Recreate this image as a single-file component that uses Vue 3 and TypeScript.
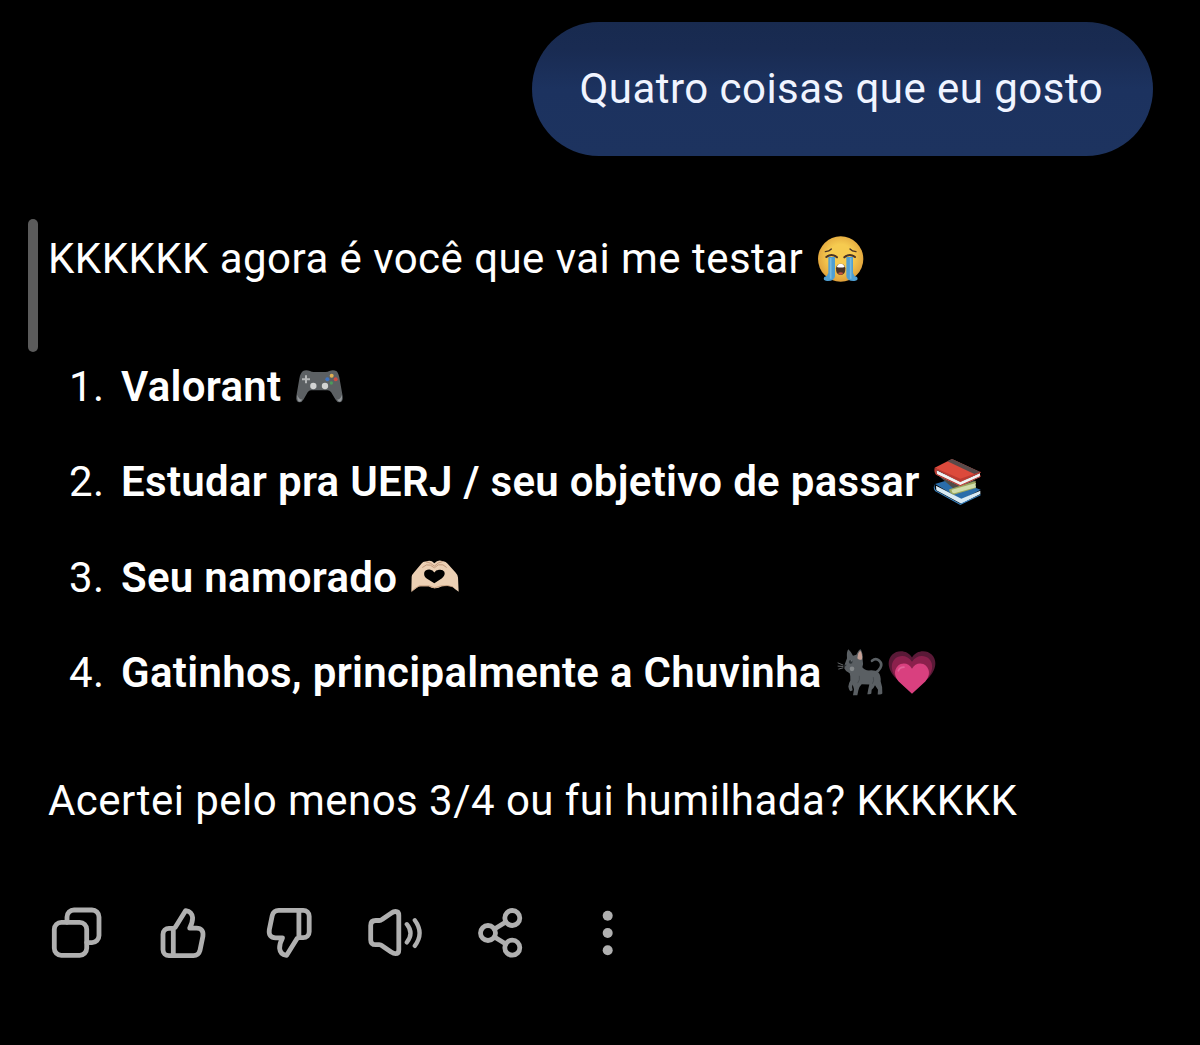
<script setup lang="ts">
type Emoji = 'gamepad' | 'books' | 'hands' | 'cat' | 'heart'

interface Favorite {
  text: string
  cls: string
  emojis: Emoji[]
}

const question = 'Quatro coisas que eu gosto'
const intro = 'KKKKKK agora é você que vai me testar'
const outro = 'Acertei pelo menos 3/4 ou fui humilhada? KKKKKK'

const favorites: Favorite[] = [
  { text: 'Valorant', cls: 'valorant', emojis: ['gamepad'] },
  { text: 'Estudar pra UERJ / seu objetivo de passar', cls: 'uerj', emojis: ['books'] },
  { text: 'Seu namorado', cls: 'namorado', emojis: ['hands'] },
  { text: 'Gatinhos, principalmente a Chuvinha', cls: 'gatinhos', emojis: ['cat', 'heart'] },
]
</script>

<template>
  <main class="chat">
    <div class="bubble">{{ question }}</div>

    <section class="reply">
      <div class="marker"></div>
      <div class="content">
        <p class="line intro">
          <span>{{ intro }}</span>
          <svg class="emoji" viewBox="51 25 150 150" role="img" aria-label="😭">
            <defs>
              <radialGradient id="face" cx=".5" cy=".45" r=".55">
                <stop offset=".5" stop-color="#f6cb50" />
                <stop offset="1" stop-color="#dfa03a" />
              </radialGradient>
            </defs>
            <circle cx="125" cy="100" r="68" fill="url(#face)" />
            <path d="M79 78q12-1 18-8M171 78q-12-1-18-8" fill="none" stroke="#4b3426" stroke-width="4" stroke-linecap="round" />
            <path d="M88 94h20v58q-2 15-24 14-14-1-8-12 10-3 12-12zM162 94h-20v58q2 15 24 14 14-1 8-12-10-3-12-12z" fill="#4f9fd2" />
            <path d="M95 97v62M155 97v62" stroke="#76b9de" stroke-width="5" />
            <path d="M82 94q16-13 32 1M168 94q-16-13-32 1" fill="none" stroke="#4b3426" stroke-width="6" stroke-linecap="round" />
            <path d="M111 128q1-14 14-14t14 14q1 20-14 20t-14-20z" fill="#493326" />
            <path d="M113 124q3-10 12-10t12 10q-12 3-24 0z" fill="#fff" />
            <path d="M117 142q8-5 16 0-3 5-8 5t-8-5z" fill="#c9573f" />
          </svg>
        </p>

        <ol class="list">
          <li v-for="(item, i) in favorites" :key="item.cls" class="line" :class="item.cls">
            <span class="num">{{ i + 1 }}.</span>
            <strong>{{ item.text }}</strong>
            <template v-for="e in item.emojis" :key="e">
              <svg v-if="e === 'gamepad'" class="emoji" viewBox="27 6 150 150" role="img" aria-label="🎮">
                <path d="M51 33q9-5 21 0 5 3 11 3h36q6 0 11-3 12-5 22 1 6 6 9 24l9 51q2 18-10 18-7 0-12-9l-13-22q-4-5-10-5H75q-6 0-10 6l-12 21q-5 9-12 9-12 0-10-18l9-53q3-17 11-23z" fill="#5c6063" />
                <path d="M34 104q-1 21 7 21 5 0 8-7-10 2-15-14zM168 104q1 21-7 21-5 0-8-7 10 2 15-14z" fill="#94989b" />
                <path d="M60 46v24M48 58h24" stroke="#b4b6b7" stroke-width="6" />
                <circle cx="82" cy="78" r="9.500" fill="#d2d3d3" /><circle cx="117" cy="78" r="9.500" fill="#d2d3d3" />
                <circle cx="137" cy="47" r="6" fill="#e0b052" /><circle cx="124" cy="58" r="6" fill="#3f74c0" />
                <circle cx="149" cy="58" r="6" fill="#d14c40" /><circle cx="136" cy="69" r="5" fill="#4c9a5a" />
              </svg>
              <svg v-else-if="e === 'books'" class="emoji" viewBox="35 22 150 150" role="img" aria-label="📚">
                <path d="M41 103l50-15 87 32-58 30z" fill="#2a6dab" />
                <path d="M44 108l76 39 57-24v10l-57 29-75-40z" fill="#d9ebf5" />
                <path d="M41 103q-4 12 4 20l72 39 61-28v3l-61 29-75-41q-9-11-1-22z" fill="#3b86c6" />
                <path d="M49 76l27-6 88 24-60 29z" fill="#514c48" />
                <path d="M84 119l79-25v7q-4 6 1 14l-67 20q-16-6-13-16z" fill="#9ca860" />
                <path d="M91 120l73-20q-3 6 0 13l-65 18q-9-2-8-11z" fill="#cfdcab" />
                <path d="M40 54l52-26 86 40-61 30z" fill="#dc4a3c" />
                <path d="M78 35l14-7 86 40-14 7z" fill="#584a4a" />
                <path d="M45 61l72 36 59-27v12l-59 27-71-34z" fill="#e3eaed" />
                <path d="M40 54q-3 12 4 21l73 35 61-29v-4l-61 27-70-32q-3-6 0-10l70 34 61-27v-3l-61 21z" fill="#bd3b32" />
                <path d="M47 65l70 34 58-26v7l-58 26-69-33z" fill="#f1f3f4" />
              </svg>
              <svg v-else-if="e === 'hands'" class="emoji" viewBox="30 8.5 150 150" role="img" aria-label="🫶🏻">
                <path fill-rule="evenodd" d="M34 125L35 80Q36 73 42 67L64 41Q70 32 79 34Q92 28 103 39Q114 27 128 33Q137 32 143 41L166 66Q173 73 174 82L176 125Q164 117 157 110Q146 105 126 108Q112 116 103 114Q94 114 86 108H62Q54 108 49 114ZM103 99L126 84Q137 75 133 65Q128 57 117 59Q107 60 103 67Q99 60 89 58Q77 57 73 66Q70 77 80 85Z" fill="#ecd0b4" />
                <path d="M67 52Q80 40 91 45L103 53L115 44Q130 40 140 52M78 35Q91 36 103 48M128 34Q114 36 103 48" fill="none" stroke="#c39a7c" stroke-width="3" />
                <path d="M35 124Q45 113 58 107H87L103 113L124 107Q145 104 158 110" fill="none" stroke="#c69b7a" stroke-width="2.500" />
              </svg>
              <svg v-else-if="e === 'cat'" class="emoji" viewBox="30 24.6 150 150" role="img" aria-label="🐈‍⬛">
                <path d="M141 63Q152 54 162 62Q173 72 166 84Q160 95 150 99" fill="none" stroke="#5a5f63" stroke-width="8" stroke-linecap="round" />
                <path d="M66 55Q64 35 70 28Q79 36 84 48L94 45Q100 30 107 28Q115 40 113 62Q116 72 112 82Q118 91 132 92Q150 90 160 98Q168 106 167 125Q173 140 172 160Q172 164 158 164L159 150L150 136Q146 145 140 150L139 161Q138 164 127 163L130 147L133 134L110 133Q102 140 100 152L97 166H84L87 148L83 134Q79 142 83 151L77 154Q72 152 70 140Q71 130 76 122Q77 108 74 100Q62 96 58 86Q58 72 66 55Z" fill="#5a5f63" />
                <path d="M97 55Q99 37 106 33Q113 43 111 58Q104 63 97 55Z" fill="#c6a196" />
                <circle cx="77" cy="66" r="5.500" fill="#2c3236" /><circle cx="79" cy="63" r="2" fill="#8b9296" />
                <path d="M57 75h8l-4 5z" fill="#2a3034" />
                <path d="M55 76L38 69M55 80l-17-1M55 84l-15 4" stroke="#787c7e" stroke-width="2.500" />
                <circle cx="81" cy="87" r="7" fill="#85898b" />
                <path d="M103 108q3 12-5 22M145 112q3 12-3 20" fill="none" stroke="#484d51" stroke-width="3" />
              </svg>
              <svg v-else class="emoji" viewBox="188 24.6 150 150" role="img" aria-label="💗">
                <path d="M263 53c13-23 44-24 59-9 20 20 10 50-8 69l-51 46-51-46c-18-19-28-49-8-69 15-15 46-14 59 9z" fill="#5a1937" />
                <path d="M263 66c12-20 37-22 51-9 17 17 9 44-6 58l-45 45-45-45c-15-14-23-41-6-58 14-13 39-11 51 9z" fill="#8b204c" />
                <path d="M263 87c9-18 30-20 42-9 15 15 9 35-2 47l-40 37-40-37c-11-12-17-32-2-47 12-11 33-9 42 9z" fill="#d9407f" />
                <path d="M222 93q4-11 17-11" fill="none" stroke="#e2649a" stroke-width="5" stroke-linecap="round" />
              </svg>
            </template>
          </li>
        </ol>

        <p class="line outro">{{ outro }}</p>
      </div>
    </section>

    <nav class="actions">
      <button aria-label="Copiar">
        <svg viewBox="0 0 60 60">
          <rect x="7.3" y="19.3" width="32.4" height="33" rx="7" />
          <path d="M20 19.3V14a7 7 0 0 1 7-7h18a7 7 0 0 1 7 7v18.6a7 7 0 0 1-7 7h-5.3" />
        </svg>
      </button>
      <button aria-label="Gostei">
        <svg viewBox="0 0 60 60">
          <path d="M20.3 25.3H16a6 6 0 0 0-6 6v15.4a6 6 0 0 0 6 6h24.5q5 0 6.4-5l3-14.5q1-8-6.4-8H36.700q3-5.800 2.900-10.400Q39 8.500 32.700 7.600L22.300 24.300l-2 1v27.400" />
        </svg>
      </button>
      <button aria-label="Não gostei">
        <svg viewBox="0 0 60 60">
          <path transform="rotate(180 30.1 30)" d="M20.3 25.3H16a6 6 0 0 0-6 6v15.4a6 6 0 0 0 6 6h24.5q5 0 6.4-5l3-14.5q1-8-6.4-8H36.700q3-5.800 2.900-10.400Q39 8.500 32.700 7.600L22.300 24.300l-2 1v27.400" />
        </svg>
      </button>
      <button aria-label="Ouvir">
        <svg viewBox="0 0 60 60">
          <path d="M10.700 17.500h3.600q1.500 0 2.700-1L26.500 10q2-1.500 4-1.500 3.300 0 3.300 4V46.700q0 4-3.300 4-2 0-4-1.500L17 42.700q-1.200-1-2.700-1h-3.600q-5 0-5-5V22.500q0-5 5-5z" />
          <path class="waves" d="M41.800 21.200q7.400 9 0 18.200M49.800 17.200q9.600 12.900 0 25.700" />
        </svg>
      </button>
      <button aria-label="Compartilhar">
        <svg viewBox="0 0 60 60">
          <circle cx="41.300" cy="15" r="7.500" /><circle cx="17" cy="30" r="7.500" /><circle cx="41.300" cy="44.700" r="7.500" />
          <path d="M23.500 26l11.300-7M23.500 34l11.300 7" />
        </svg>
      </button>
      <button aria-label="Mais">
        <svg viewBox="0 0 60 60" class="dots">
          <circle cx="30.700" cy="12.800" r="5" /><circle cx="30.700" cy="30" r="5" /><circle cx="30.700" cy="47.200" r="5" />
        </svg>
      </button>
    </nav>
  </main>
</template>

<style>
body {
  margin: 0;
  background: #000;
}
</style>

<style scoped>
.chat {
  box-sizing: border-box;
  width: 1200px;
  height: 1045px;
  padding-top: 22px;
  display: flex;
  flex-direction: column;
  overflow: hidden;
  background: #000;
  color: #fff;
  font-family: Roboto, sans-serif;
  font-size: 42px;
  letter-spacing: 0.46px;
  white-space: nowrap;
}

.bubble {
  box-sizing: border-box;
  align-self: flex-end;
  width: 621px;
  height: 134px;
  margin-right: 47px;
  padding-left: 47.5px;
  border-radius: 67px;
  background: linear-gradient(#182a4f 0%, #192b52 20%, #1c325f 50%, #1d335f 100%);
  color: #f0f4ff;
  line-height: 134px;
}

.reply {
  display: flex;
  gap: 10px;
  height: 684px;
  margin-top: 63px;
  padding-left: 28px;
}

.marker {
  width: 10px;
  height: 133px;
  border-radius: 5px;
  background: #5b5b5b;
}

.content {
  padding-top: 10px;
}

.line {
  display: flex;
  align-items: center;
  height: 60px;
  margin: 0;
  line-height: 60px;
}

.list {
  display: flex;
  flex-direction: column;
  gap: 35.4px;
  margin: 68px 0;
  padding: 0 0 0 21px;
  list-style: none;
}

.num {
  width: 52px;
}

strong {
  font-weight: 600;
  letter-spacing: 0.3px;
}

.emoji {
  flex: none;
  width: 50px;
  height: 50px;
  margin-left: 13px;
}

.emoji + .emoji {
  margin-left: 2.700px;
}

.actions {
  display: flex;
  gap: 46px;
  padding-left: 47px;
}

button {
  width: 60px;
  height: 60px;
  padding: 0;
  border: 0;
  background: none;
}

button svg {
  display: block;
  width: 60px;
  height: 60px;
  fill: none;
  stroke: #b0b0b0;
  stroke-width: 4.800;
  stroke-linecap: round;
  stroke-linejoin: round;
}

button .waves {
  stroke-width: 4.300;
}

button .dots {
  fill: #b0b0b0;
  stroke: none;
}
</style>
